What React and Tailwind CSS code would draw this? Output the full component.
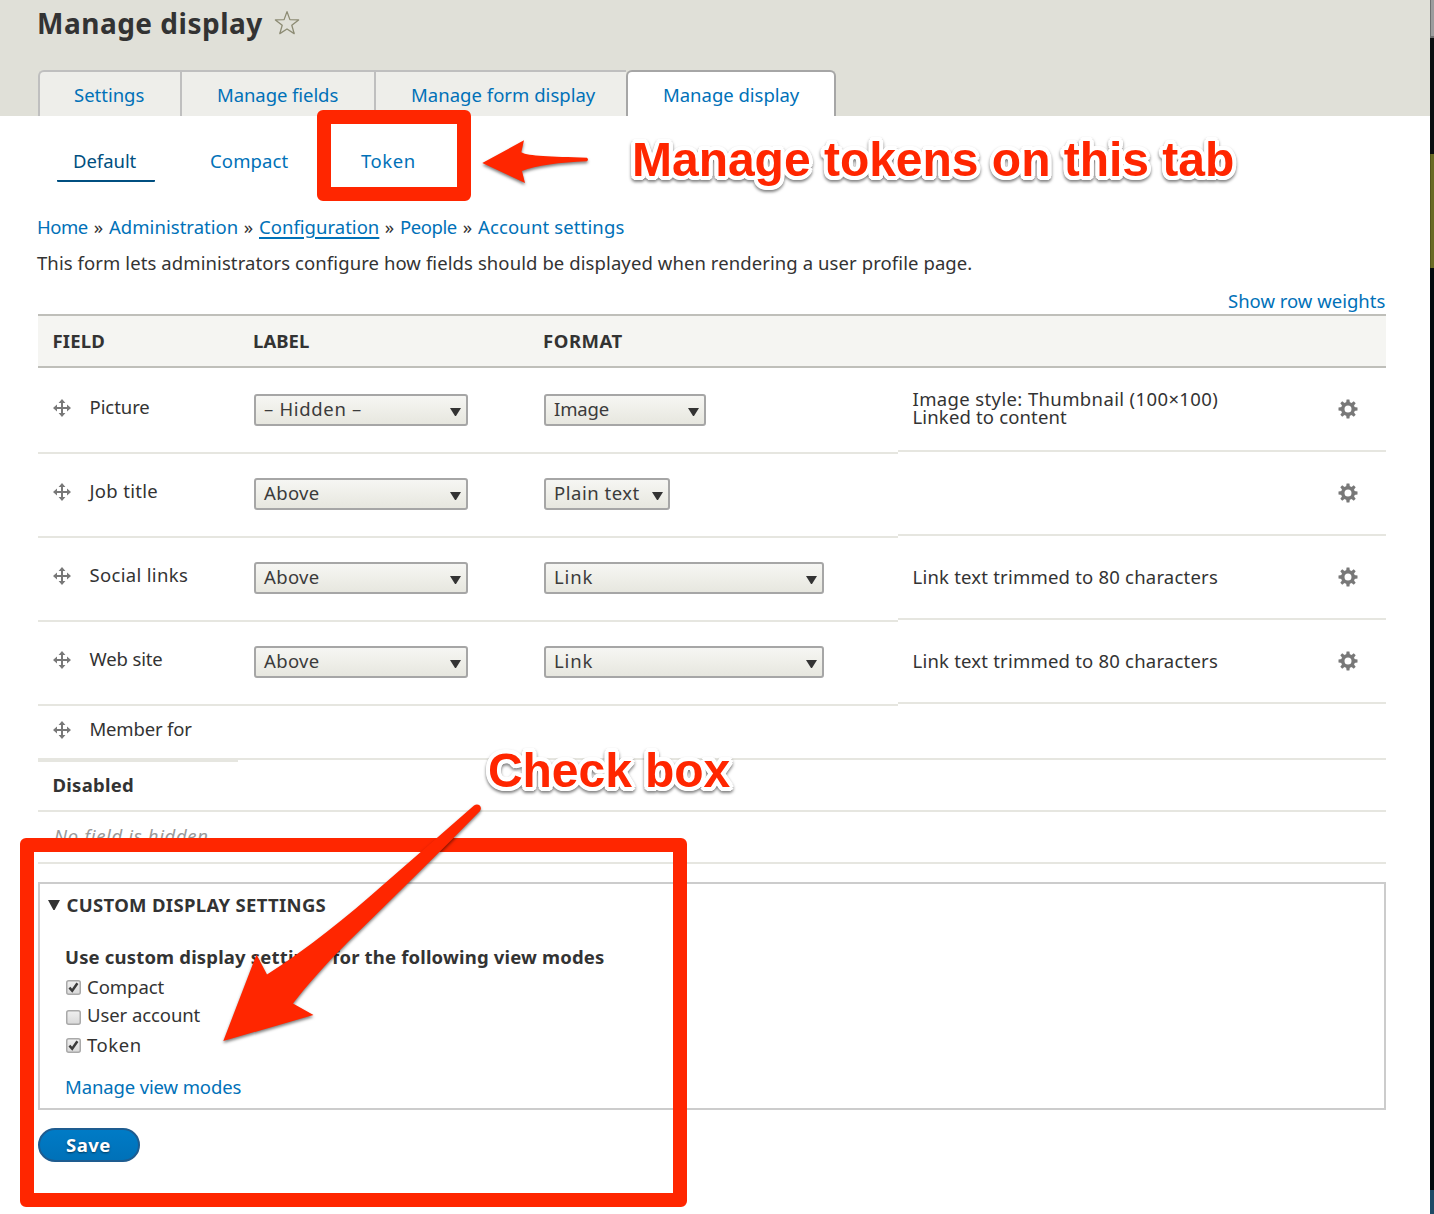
import { useLayoutEffect, useRef, useState } from "react";

/* Text set to an exact measure: tracking is computed from the natural width. */
function Fit({ w, children, className = "", inner = "" }) {
  const ref = useRef(null);
  const [spacing, setSpacing] = useState(0);
  useLayoutEffect(() => {
    const natural = ref.current.getBoundingClientRect().width;
    setSpacing((w + 0.3 - natural) / Math.max(1, children.length - 1));
  }, []);
  return (
    <span className={"block shrink-0 whitespace-nowrap " + className} style={{ width: w }}>
      <span ref={ref} className={"inline-block " + inner} style={{ letterSpacing: spacing }}>
        {children}
      </span>
    </span>
  );
}

function Star() {
  return (
    <svg className="ml-[11px] h-[26px] w-[26px]" viewBox="0 0 26 26" fill="none" stroke="#8c8b73" strokeWidth="1.3" strokeLinejoin="round">
      <path d="M13 1.6 15.9 9.6 24.6 9.9 17.8 15.3 20.2 23.6 13 19 5.8 23.6 8.2 15.3 1.4 9.9 10.1 9.6Z" />
    </svg>
  );
}

function MoveIcon({ className = "" }) {
  return (
    <svg className={"h-[18px] w-[18px] shrink-0 " + className} viewBox="0 0 18 18" fill="#787878">
      <path d="M9 0 12.4 4H10V8H14V5.6L18 9 14 12.4V10H10V14H12.4L9 18 5.6 14H8V10H4V12.4L0 9 4 5.6V8H8V4H5.6Z" />
    </svg>
  );
}

function Gear() {
  return (
    <svg className="ml-auto mt-[5px] mr-[28px] h-5 w-5 shrink-0" viewBox="-10 -10 20 20" fill="#787878">
      <path fillRule="evenodd" d="M0-7A7 7 0 1 0 0 7 7 7 0 1 0 0-7ZM0-3.500A3.500 3.500 0 1 1 0 3.500 3.500 3.500 0 1 1 0-3.500Z" />
      {[0, 45, 90, 135, 180, 225, 270, 315].map((a) => (
        <path key={a} d="M-1.900-6-1.400-9.500H1.400L1.900-6Z" transform={`rotate(${a})`} />
      ))}
    </svg>
  );
}

function Select({ w, label, tw }) {
  return (
    <button
      className="flex h-8 items-center rounded-[3px] border-2 border-[#a6a6a6] bg-linear-to-b from-[#f6f6f3] to-[#e7e7df] pb-[2px] pl-2 pr-[5px] text-left leading-[26px] text-[#3b3b3b]"
      style={{ width: w }}
    >
      <Fit w={tw}>{label}</Fit>
      <svg className="ml-auto mt-[5px] h-2 w-[11px]" viewBox="0 0 11 8" fill="#333">
        <path d="M0 0H11L6 8H5Z" />
      </svg>
    </button>
  );
}

function Row({ first, name, nw, label, lw, format, fw, sw, children }) {
  return (
    <div className={"grid grid-cols-[216px_290px_354px_1fr] " + (first ? "h-[86px]" : "h-[84px]")}>
      <div className={"flex border-b-2 border-[#e6e6e0] pl-[15px] " + (first ? "pt-[26px]" : "pt-6")}>
        <MoveIcon className="mt-[5px]" />
        <Fit w={nw} className="ml-[18.5px]">{name}</Fit>
      </div>
      <div className={"border-b-2 border-[#e6e6e0] " + (first ? "pt-[26px]" : "pt-6")}>
        <Select w={214} label={label} tw={lw} />
      </div>
      <div className={"border-b-2 border-[#e6e6e0] " + (first ? "pt-[26px]" : "pt-6")}>
        <Select w={sw} label={format} tw={fw} />
      </div>
      <div className={"mb-[2px] flex border-b-2 border-[#e6e6e0] pl-[14.5px] leading-[18px] " + (first ? "pt-[26px]" : "pt-6")}>
        {children}
        <Gear />
      </div>
    </div>
  );
}

function Check({ checked, w, label, className = "", box = "" }) {
  return (
    <div className={"flex " + className}>
      <svg className={"h-[15px] w-[15px] shrink-0 " + box} viewBox="0 0 15 15">
        <defs>
          <linearGradient id="boxfill" x1="0" y1="0" x2="0" y2="1">
            <stop offset="0" stopColor="#f0f0f0" />
            <stop offset="1" stopColor="#d9d9d9" />
          </linearGradient>
        </defs>
        <rect x=".75" y=".75" width="13.5" height="13.5" rx="2" fill="url(#boxfill)" stroke="#a9a9a9" strokeWidth="1.5" />
        {checked && <path d="M3.4 7.7 6.2 10.8 11.4 3.3" fill="none" stroke="#3c3c3c" strokeWidth="2.5" />}
      </svg>
      <Fit w={w} className="ml-[6px]">{label}</Fit>
    </div>
  );
}

function Sep() {
  return <span className="mx-[5px] w-[11px] shrink-0 text-center">»</span>;
}

const callout =
  "absolute font-['Liberation_Sans',Arial,sans-serif] text-[48px] leading-[48px] font-bold text-[#ff2600] [text-shadow:4px_0_white,3.7px_1.5px_white,2.8px_2.8px_white,1.5px_3.7px_white,0_4px_white,-1.5px_3.7px_white,-2.8px_2.8px_white,-3.7px_1.5px_white,-4px_0_white,-3.7px_-1.5px_white,-2.8px_-2.8px_white,-1.5px_-3.7px_white,0_-4px_white,1.5px_-3.7px_white,2.8px_-2.8px_white,3.7px_-1.5px_white] drop-shadow-[0_2px_1.5px_rgba(0,0,0,0.5)]";

export default function App() {
  return (
    <div className="relative flex h-[1214px] w-[1434px] overflow-hidden bg-white font-['Noto_Sans','Open_Sans',sans-serif] text-[18.5px] leading-[26px] text-[#333]">
      <div className="flex w-[1430px] flex-col">
        <header className="h-[116px] bg-[#e0e0d8] pl-[38px]">
          <h1 className="flex h-[46px] items-center text-[28px] leading-[46px] font-bold">
            <Fit w={225} className="-ml-px mr-px">Manage display</Fit>
            <Star />
          </h1>
          <nav className="mt-6 flex h-[46px] text-[#0071b8]">
            <a className="flex w-[142px] items-center rounded-tl-[6px] border-t-2 border-l-2 border-[#bfbfbf] bg-[#eeeeea] pt-[2px] pl-[34px]">
              <Fit w={70}>Settings</Fit>
            </a>
            <a className="flex w-[194px] items-center border-t-2 border-l-2 border-[#bfbfbf] bg-[#eeeeea] pt-[2px] pl-[35px]">
              <Fit w={121}>Manage fields</Fit>
            </a>
            <a className="flex w-[252px] items-center border-t-2 border-l-2 border-[#bfbfbf] bg-[#eeeeea] pt-[2px] pl-[35px]">
              <Fit w={184}>Manage form display</Fit>
            </a>
            <a className="flex w-[210px] items-center rounded-t-[6px] border-x-2 border-t-2 border-[#a6a6a6] bg-white pt-[2px] pl-[35px]">
              <Fit w={136}>Manage display</Fit>
            </a>
          </nav>
        </header>

        <main className="flex flex-col pl-[38px] pr-[44px]">
          <nav className="mt-8 flex h-[34px] text-[#0071b8]">
            <a className="ml-[19px] w-[98px] rounded-[1px] border-b-2 border-[#004f80] pl-4 text-[#004f80]">
              <Fit w={63}>Default</Fit>
            </a>
            <Fit w={78} className="ml-[55px]">Compact</Fit>
            <Fit w={54} className="ml-[73px]">Token</Fit>
          </nav>

          <div className="mt-8 -ml-px flex text-[#0071b8]">
            <Fit w={51}>Home</Fit>
            <span className="flex text-[#333]"><Sep /></span>
            <Fit w={129}>Administration</Fit>
            <span className="flex text-[#333]"><Sep /></span>
            <Fit w={120} inner="underline decoration-2 underline-offset-[3px]">Configuration</Fit>
            <span className="flex text-[#333]"><Sep /></span>
            <Fit w={57}>People</Fit>
            <span className="flex text-[#333]"><Sep /></span>
            <Fit w={146}>Account settings</Fit>
          </div>
          <p className="mt-[10px] -ml-px">
            <Fit w={935}>This form lets administrators configure how fields should be displayed when rendering a user profile page.</Fit>
          </p>
          <div className="mt-3 flex h-[26px] justify-end pr-px text-[#0071b8]">
            <Fit w={157}>Show row weights</Fit>
          </div>

          <section>
            <div className="grid h-[54px] grid-cols-[216px_290px_1fr] items-center border-y-2 border-[#bfbfba] bg-[#f5f5f2] font-bold">
              <Fit w={52} className="ml-[14.500px]">FIELD</Fit>
              <Fit w={56} className="-ml-px">LABEL</Fit>
              <Fit w={79} className="-ml-px">FORMAT</Fit>
            </div>
            <Row first name="Picture" nw={60} label="– Hidden –" lw={97} format="Image" fw={55} sw={162}>
              <div className="-mt-1">
                <Fit w={305}>Image style: Thumbnail (100×100)</Fit>
                <Fit w={154}>Linked to content</Fit>
              </div>
            </Row>
            <Row name="Job title" nw={68} label="Above" lw={55} format="Plain text" fw={85} sw={126} />
            <Row name="Social links" nw={98} label="Above" lw={55} format="Link" fw={38} sw={280}>
              <Fit w={305} className="mt-[6px]">Link text trimmed to 80 characters</Fit>
            </Row>
            <Row name="Web site" nw={73} label="Above" lw={55} format="Link" fw={38} sw={280}>
              <Fit w={305} className="mt-[6px]">Link text trimmed to 80 characters</Fit>
            </Row>
            <div className="flex h-[54px] border-b-2 border-[#e6e6e0] pt-[10px] pl-[15px]">
              <MoveIcon className="mt-[5px]" />
              <Fit w={102} className="ml-[18.5px]">Member for</Fit>
            </div>
            <div className="h-[52px] border-b-2 border-[#e6e6e0]">
              <div className="w-[200px] border-t-2 border-[#e6e6e0] pt-[10px] pl-[14.5px] font-bold">
                <Fit w={81}>Disabled</Fit>
              </div>
            </div>
            <div className="h-[52px] border-b-2 border-[#e6e6e0] pt-[11px] pl-4 text-[#999] italic">
              <Fit w={159}>No field is hidden.</Fit>
            </div>
          </section>

          <section className="mt-[18px] h-[228px] border-2 border-[#ccc] pt-2 pl-[25px]">
            <h2 className="-ml-[17px] flex font-bold">
              <svg className="mt-2 mr-[6.5px] h-[10px] w-3" viewBox="0 0 12 10" fill="#333">
                <path d="M0 0H12L6.6 10H5.4Z" />
              </svg>
              <Fit w={259}>CUSTOM DISPLAY SETTINGS</Fit>
            </h2>
            <h3 className="mt-[26px] font-bold">
              <Fit w={539}>Use custom display settings for the following view modes</Fit>
            </h3>
            <Check checked w={77} label="Compact" className="mt-1 ml-px" box="mt-[6px]" />
            <Check w={113} label="User account" className="mt-[2px] ml-px" box="mt-2" />
            <Check checked w={54} label="Token" className="mt-1 ml-px" box="mt-[6px]" />
            <Fit w={176} className="mt-4 text-[#0071b8]">Manage view modes</Fit>
          </section>

          <button className="mt-[18px] flex h-[34px] w-[102px] justify-center rounded-full border-2 border-[#1e5c90] bg-linear-to-b from-[#007bc6] to-[#0071b8] pt-[2px] pr-[2px] font-bold text-white [text-shadow:0_1px_2px_rgba(0,0,0,0.5)]">
            <Fit w={44}>Save</Fit>
          </button>
        </main>
      </div>

      <aside className="flex w-1 flex-col bg-[#03090d]">
        <div className="h-[38px] border-b-2 border-l border-[#6f6f70] bg-[#9c9c9d]" />
        <div className="h-[116px] bg-[#0b0e10]" />
        <div className="h-[114px] border-l border-[#55551c] bg-[#6a6b24]" />
        <div className="grow" />
        <div className="h-6 bg-[#1e4a66]" />
      </aside>

      {/* Callouts drawn over the page */}
      <div className="absolute top-[109.5px] left-[316.5px] h-[91px] w-[154.5px] rounded-[6px] border-[14px] border-[#ff2600]" />
      <div className="absolute top-[838px] left-5 h-[368.5px] w-[667px] rounded-[6px] border-[14px] border-[#ff2600]" />
      <svg className="absolute top-[130px] left-[470px] h-[70px] w-[130px] drop-shadow-[0_2px_1.5px_rgba(0,0,0,0.5)]" viewBox="470 130 130 70" fill="#ff2600">
        <path d="M482.3 163 524 140.3 521.3 152.3C529 156.5 550 156.5 587 157.7Q589 159.5 587 161.2C560 162.500 536 165 522 171L525 183Z" />
      </svg>
      <svg className="absolute top-[790px] left-[210px] h-[270px] w-[290px] drop-shadow-[0_2px_1.5px_rgba(0,0,0,0.5)]" viewBox="210 790 290 270" fill="#ff2600">
        <path d="M223.300 1041 256.500 954.500 267 974.500C308 948 346 918 384 884L438 837 474 805.500C478 802.500 483 806.500 480 811L450 841.500C417 874 383 908 348 942C327 963 307 985 293 1003.500L313.500 1015Z" />
      </svg>
      <div className={callout + " top-[136px] left-[632px]"}>
        <Fit w={602}>Manage tokens on this tab</Fit>
      </div>
      <div className={callout + " top-[747px] left-[488px]"}>
        <Fit w={242}>Check box</Fit>
      </div>
    </div>
  );
}
